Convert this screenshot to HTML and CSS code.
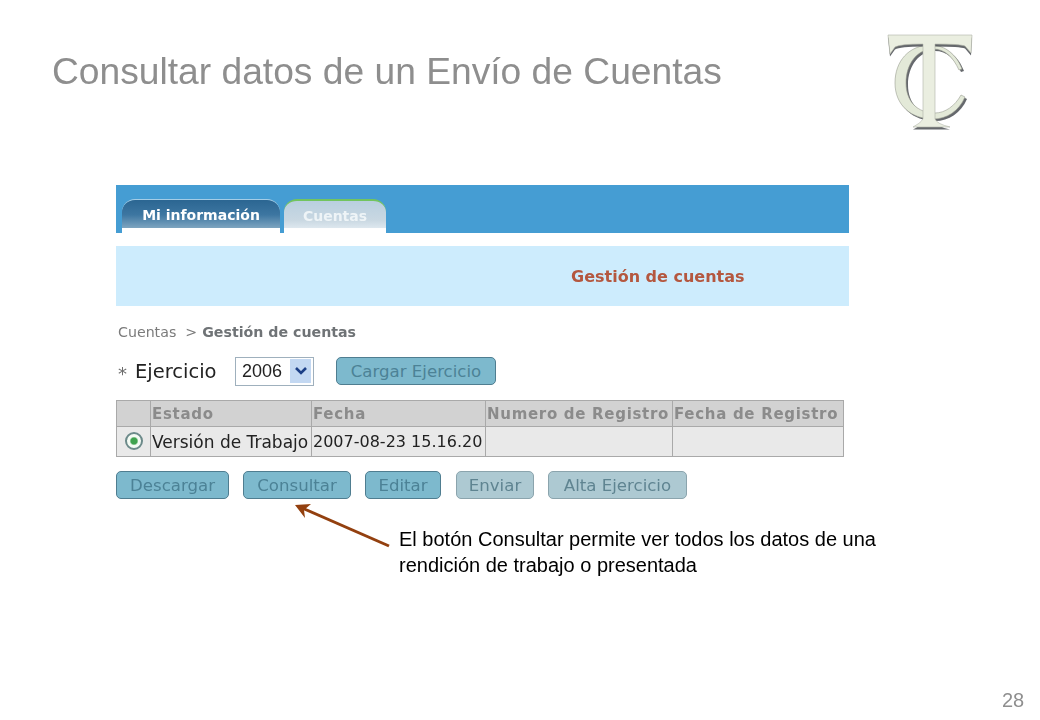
FILE: index.html
```html
<!DOCTYPE html>
<html lang="es">
<head>
<meta charset="utf-8">
<title>Consultar datos de un Envío de Cuentas</title>
<link rel="stylesheet" href="styles.css">
</head>
<body>
<main class="slide">
  <h1 class="title">Consultar datos de un Envío de Cuentas</h1>
  <svg class="logo" width="90" height="100" viewBox="0 0 90 100" aria-hidden="true">
    <path class="logo-shade" d="M77 36 C72 22 60 12 46 12 C24 12 10 28 10 50 C10 72 26 86 48 86 C62 86 74 78 80 64 L76 62 C70 73 60 80 50 80 C32 80 21 68 21 50 C21 30 33 16 48 16 C60 16 68 24 74 37 Z" transform="translate(2 2)"/>
    <path class="logo-c" d="M77 36 C72 22 60 12 46 12 C24 12 10 28 10 50 C10 72 26 86 48 86 C62 86 74 78 80 64 L76 62 C70 73 60 80 50 80 C32 80 21 68 21 50 C21 30 33 16 48 16 C60 16 68 24 74 37 Z"/>
    <path class="logo-shade" d="M3 2 H87 L86 20 L80 13 Q75 11 50 11 V86 Q52 91 65 94 H28 Q36 90 38 86 V11 Q15 11 10 14 L5 21 Z" transform="translate(0 2.5)"/>
    <path class="logo-t" d="M3 2 H87 L86 20 L80 13 Q75 11 50 11 V86 Q52 91 65 94 H28 Q36 90 38 86 V11 Q15 11 10 14 L5 21 Z"/>
  </svg>

  <section class="shot">
    <nav class="tabbar">
      <span class="tab tab-active">Mi información</span>
      <span class="tab tab-current">Cuentas</span>
    </nav>
    <div class="banner"><h2 class="banner-title">Gestión de cuentas</h2></div>
    <p class="crumbs">Cuentas<span class="crumb-sep">&gt;</span><b class="crumb-here">Gestión de cuentas</b></p>
    <div class="filter">
      <span class="req">*</span>
      <label class="filter-label">Ejercicio</label>
      <span class="select">2006<span class="select-arrow"><svg width="14" height="10" viewBox="0 0 14 10" aria-hidden="true"><path d="M2 2 L7 7 L12 2" fill="none" stroke="#1c3f86" stroke-width="2.6"/></svg></span></span>
      <span class="btn btn-load">Cargar Ejercicio</span>
    </div>
    <table class="grid">
      <colgroup><col class="c0"><col class="c1"><col class="c2"><col class="c3"><col class="c4"></colgroup>
      <thead>
        <tr><th></th><th>Estado</th><th>Fecha</th><th>Numero de Registro</th><th>Fecha de Registro</th></tr>
      </thead>
      <tbody>
        <tr><td class="radio-cell"><span class="radio"></span></td><td class="state">Versión de Trabajo</td><td>2007-08-23 15.16.20</td><td></td><td></td></tr>
      </tbody>
    </table>
    <div class="actions">
      <span class="btn b-desc">Descargar</span>
      <span class="btn b-cons">Consultar</span>
      <span class="btn b-edit">Editar</span>
      <span class="btn btn-off b-env">Enviar</span>
      <span class="btn btn-off b-alta">Alta Ejercicio</span>
    </div>
  </section>

  <svg class="arrow" width="110" height="60" viewBox="0 0 110 60" aria-hidden="true">
    <path d="M95 43 L8 5" fill="none" stroke="#93400f" stroke-width="3"/>
    <path d="M1 2 L17 1 L10 7 L11 15 Z" fill="#93400f"/>
  </svg>
  <p class="note">El botón Consultar permite ver todos los datos de una<br>rendición de trabajo o presentada</p>
  <span class="page-no">28</span>
</main>
</body>
</html>
```

FILE: styles.css
```css
* { box-sizing: border-box; }
html, body { margin: 0; padding: 0; background: #fff; }
.slide {
  position: relative;
  width: 1040px;
  height: 720px;
  overflow: hidden;
  font-family: "Liberation Sans", Arial, sans-serif;
  padding-top: 50px;
}
.title {
  margin: 0 0 93px 52px;
  font-size: 37.2px;
  line-height: 42px;
  font-weight: 400;
  color: #8e8e8e;
  white-space: nowrap;
  filter: blur(.3px);
}
.logo { position: absolute; left: 885px; top: 33px; filter: blur(.5px); }
.logo-c { fill: #e3e9d8; stroke: #9a9e92; stroke-width: .6; }
.logo-t { fill: #eaeee0; stroke: #b0b4a8; stroke-width: .6; }
.logo-shade { fill: #4a4d52; opacity: .85; }

.shot {
  margin-left: 116px;
  width: 733px;
  font-family: "DejaVu Sans", sans-serif;
  filter: blur(.45px);
}
.tabbar {
  height: 48px;
  background: #459dd3;
  display: flex;
  align-items: flex-end;
  padding-left: 6px;
  gap: 4px;
}
.tab {
  height: 34px;
  display: flex;
  align-items: center;
  justify-content: center;
  font-weight: 700;
  font-size: 14px;
  color: #fff;
  border-radius: 13px 13px 0 0;
  padding-bottom: 3px;
}
.tab-active {
  width: 158px;
  background: linear-gradient(#2b6692 0%, #3d76a1 45%, #7ea5c0 85%, #fff 86%);
  border-top: 1px solid #a5cde6;
}
.tab-current {
  width: 102px;
  background: linear-gradient(#b9cfdf 0%, #c9d8e2 60%, #dde7ee 84%, #fff 86%);
  border-top: 2px solid #72c45f;
  color: #eef4f7;
}
.banner {
  margin-top: 13px;
  height: 60px;
  background: #cdecfd;
  display: flex;
  align-items: center;
  padding-left: 455px;
}
.banner-title {
  margin: 0;
  font-size: 16px;
  font-weight: 700;
  color: #b4573f;
  white-space: nowrap;
}
.crumbs {
  margin: 17px 0 0 2px;
  height: 18px;
  font-size: 14.2px;
  line-height: 18px;
  color: #7b7b7b;
  white-space: nowrap;
}
.crumb-sep { margin: 0 5px 0 9px; }
.crumb-here { color: #6f7376; }
.filter {
  margin-top: 15px;
  display: flex;
  align-items: center;
  height: 30px;
}
.req { width: 19px; padding-left: 2px; padding-top: 5px; font-size: 18px; color: #6d6d6d; }
.filter-label { width: 100px; font-size: 19.5px; color: #222; }
.select {
  width: 79px;
  height: 29px;
  border: 1px solid #9fb0bd;
  display: flex;
  align-items: center;
  justify-content: space-between;
  padding: 2px 2px 2px 6px;
  font-size: 18px;
  color: #222;
  background: #fff;
  font-family: "Liberation Sans", sans-serif;
}
.select-arrow {
  width: 21px;
  height: 24px;
  background: #c3d8f2;
  display: flex;
  align-items: center;
  justify-content: center;
}
.btn {
  display: flex;
  align-items: center;
  justify-content: center;
  height: 28px;
  background: #7db9cd;
  border: 1px solid #4f7d90;
  border-radius: 5px;
  color: #4c8296;
  font-size: 16.6px;
  font-family: "DejaVu Sans", sans-serif;
  white-space: nowrap;
}
.btn-off { background: #adc9d2; border-color: #8ba4ad; color: #5f8491; }
.btn-load { width: 160px; margin-left: 22px; }
.grid {
  margin-top: 14px;
  width: 727px;
  height: 57px;
  border-collapse: collapse;
  table-layout: fixed;
  font-size: 16px;
}
.c0 { width: 34px; }
.c1 { width: 161px; }
.c2 { width: 174px; }
.c3 { width: 187px; }
.c4 { width: 171px; }
.grid th, .grid td {
  border: 1.5px solid #a9a9a9;
  padding: 0 0 0 1px;
  text-align: left;
  white-space: nowrap;
  overflow: hidden;
}
.grid th {
  height: 26px;
  background: #d2d2d2;
  color: #8b8b8b;
  font-size: 15px;
  font-weight: 700;
  letter-spacing: .7px;
}
.grid td {
  height: 30px;
  background: #e9e9e9;
  color: #222;
  font-size: 16px;
}
.grid .state { font-size: 17px; }
.grid .radio-cell { padding: 0; text-align: center; }
.radio {
  display: inline-block;
  width: 18px;
  height: 18px;
  margin-top: 3px;
  border-radius: 50%;
  border: 2px solid #6c8a8a;
  background: radial-gradient(circle, #3fa34f 0 3px, #f4fbf4 4.5px);
}
.actions {
  margin-top: 14px;
  display: flex;
  height: 28px;
}
.b-desc { width: 113px; }
.b-cons { width: 108px; margin-left: 14px; }
.b-edit { width: 76px; margin-left: 14px; }
.b-env { width: 78px; margin-left: 15px; }
.b-alta { width: 139px; margin-left: 14px; }

.arrow { position: absolute; left: 294px; top: 503px; }
.note {
  position: absolute;
  left: 399px;
  top: 526px;
  margin: 0;
  font-size: 20px;
  line-height: 26px;
  color: #000;
  white-space: nowrap;
  filter: blur(.25px);
}
.page-no {
  position: absolute;
  left: 1002px;
  top: 689px;
  font-size: 20px;
  color: #8f8f8f;
  filter: blur(.25px);
}
```
